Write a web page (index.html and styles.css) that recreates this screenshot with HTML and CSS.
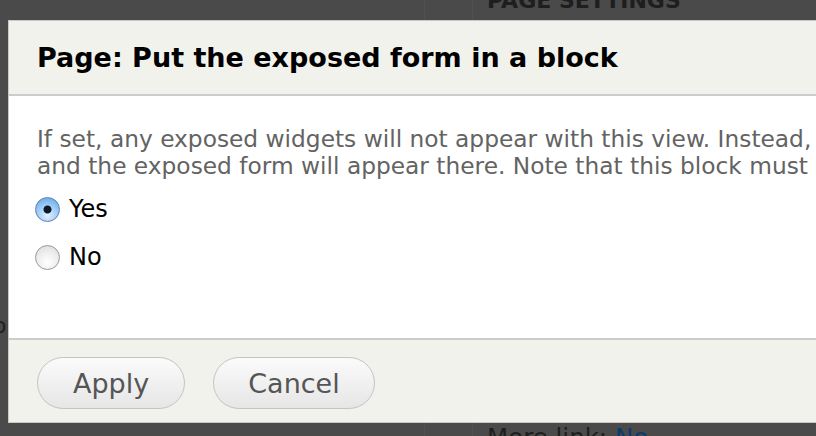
FILE: index.html
```html
<!DOCTYPE html>
<html lang="en">
<head>
    <meta charset="UTF-8">
    <meta name="viewport" content="width=device-width, initial-scale=1.0">
    <title>Page: Put the exposed form in a block</title>
    <link rel="stylesheet" href="styles.css">
</head>
<body>
    <!-- page behind the modal -->
    <div class="backdrop">
        <div class="bg-col bg-col-a"></div>
        <div class="bg-col bg-col-b"></div>
        <div class="bg-heading">PAGE SETTINGS</div>
        <div class="bg-stray">o</div>
        <div class="bg-more">More link: <a href="#">No</a></div>
    </div>

    <div class="dialog">
        <div class="dialog-header">
            <h1>Page: Put the exposed form in a block</h1>
        </div>
        <div class="dialog-body">
            <p class="description">If set, any exposed widgets will not appear with this view. Instead, a block will be made available to the Drupal block administration system,<br>and the exposed form will appear there. Note that this block must be enabled manually.</p>
            <label class="option"><input type="radio" name="exposed_block" checked> Yes</label>
            <label class="option"><input type="radio" name="exposed_block"> No</label>
        </div>
        <div class="dialog-footer">
            <button class="btn-apply">Apply</button>
            <button class="btn-cancel">Cancel</button>
        </div>
    </div>
</body>
</html>
```

FILE: styles.css
```css
html, body {
    margin: 0;
    height: 100%;
}
body {
    background: #4a4a4a;
    font-family: 'DejaVu Sans', 'Liberation Sans', sans-serif;
    overflow: hidden;
    position: relative;
}
.backdrop {
    position: absolute;
    inset: 0;
}
.bg-col {
    position: absolute;
    top: 0;
    bottom: 0;
    width: 1px;
    background: #515151;
}
.bg-col-a { left: 424px; }
.bg-col-b { left: 472px; }
.bg-heading {
    position: absolute;
    left: 487px;
    top: -12px;
    font-size: 22px;
    font-weight: bold;
    color: #1e1e1e;
}
.bg-stray {
    position: absolute;
    left: -7px;
    top: 313px;
    font-size: 22px;
    color: #1e1e1e;
}
.bg-more {
    position: absolute;
    left: 487px;
    top: 423px;
    font-size: 24.5px;
    color: #1e1e1e;
}
.bg-more a {
    color: #0a3c6e;
    text-decoration: none;
}
.dialog {
    position: absolute;
    left: 8px;
    top: 20px;
    width: 900px;
    border: 1px solid #c8c8c8;
    border-right: none;
    border-bottom: none;
    background: #fff;
}
.dialog-header {
    background: #f2f2ed;
    height: 73px;
    border-bottom: 2px solid #cccccc;
    padding-left: 28px;
    display: flex;
    align-items: center;
}
.dialog-header h1 {
    margin: 0;
    font-size: 27px;
    font-weight: bold;
    color: #000;
    white-space: nowrap;
}
.dialog-body {
    height: 242px;
    padding: 29px 0 0 28px;
    box-sizing: border-box;
    overflow: hidden;
}
.description {
    margin: 0 0 6px;
    font-size: 23.3px;
    line-height: 27px;
    color: #636363;
    white-space: nowrap;
}
.option {
    display: flex;
    align-items: center;
    gap: 9px;
    height: 48px;
    font-size: 24px;
    color: #000;
}
.option input {
    appearance: none;
    margin: 0 0 0 -2px;
    width: 25px;
    height: 25px;
    border-radius: 50%;
    border: 1px solid #9a9a9a;
    background: radial-gradient(circle at 50% 70%, #ffffff 0%, #f0f0f0 45%, #d8d8d8 100%);
    box-sizing: border-box;
}
.option input:checked {
    border-color: #5b86b8;
    background:
        radial-gradient(circle, #0d1a2a 0 3.5px, transparent 4.5px),
        radial-gradient(circle at 50% 75%, #e4f2ff 0%, #9ccbf6 50%, #5a9ee4 100%);
}
.dialog-footer {
    background: #f2f2ed;
    border-top: 2px solid #cccccc;
    border-bottom: 1px solid #c8c8c8;
    height: 85px;
    padding: 4px 0 0 28px;
    box-sizing: border-box;
    display: flex;
    align-items: center;
    gap: 28px;
}
.dialog-footer button {
    font-family: inherit;
    font-size: 27px;
    color: #555;
    height: 52px;
    padding: 0 35px;
    border-radius: 26px;
    border: 1px solid #c4c4c4;
    background: linear-gradient(#fbfbfb, #e6e6e6);
}
.dialog-footer .btn-cancel {
    padding: 0 34px;
}
```
